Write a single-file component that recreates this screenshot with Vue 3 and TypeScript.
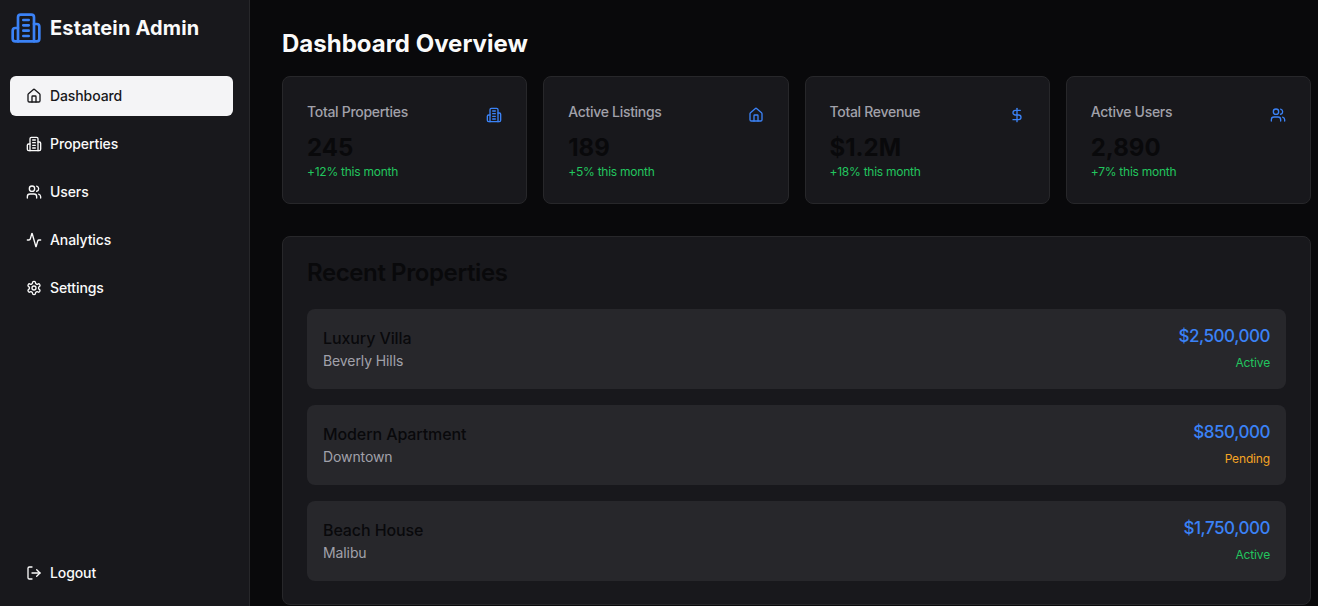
<script setup lang="ts">
type IconName = 'building' | 'home' | 'users' | 'activity' | 'settings' | 'logout' | 'dollar'

const icons: Record<IconName, string[]> = {
  building: [
    'M6 22V4a2 2 0 0 1 2-2h8a2 2 0 0 1 2 2v18Z',
    'M6 12H4a2 2 0 0 0-2 2v6a2 2 0 0 0 2 2h2',
    'M18 9h2a2 2 0 0 1 2 2v9a2 2 0 0 1-2 2h-2',
    'M10 6h4',
    'M10 10h4',
    'M10 14h4',
    'M10 18h4',
  ],
  home: [
    'M15 21v-8a1 1 0 0 0-1-1h-4a1 1 0 0 0-1 1v8',
    'M3 10a2 2 0 0 1 .709-1.528l7-5.999a2 2 0 0 1 2.582 0l7 5.999A2 2 0 0 1 21 10v9a2 2 0 0 1-2 2H5a2 2 0 0 1-2-2z',
  ],
  users: [
    'M16 21v-2a4 4 0 0 0-4-4H6a4 4 0 0 0-4 4v2',
    'M13 7a4 4 0 1 1-8 0a4 4 0 1 1 8 0z',
    'M22 21v-2a4 4 0 0 0-3-3.87',
    'M16 3.13a4 4 0 0 1 0 7.75',
  ],
  activity: [
    'M22 12h-2.48a2 2 0 0 0-1.93 1.46l-2.35 8.36a.25.25 0 0 1-.48 0L9.24 2.18a.25.25 0 0 0-.48 0l-2.35 8.36A2 2 0 0 1 4.49 12H2',
  ],
  settings: [
    'M12.22 2h-.44a2 2 0 0 0-2 2v.18a2 2 0 0 1-1 1.73l-.43.25a2 2 0 0 1-2 0l-.15-.08a2 2 0 0 0-2.73.73l-.22.38a2 2 0 0 0 .73 2.73l.15.1a2 2 0 0 1 1 1.72v.51a2 2 0 0 1-1 1.74l-.15.09a2 2 0 0 0-.73 2.73l.22.38a2 2 0 0 0 2.73.73l.15-.08a2 2 0 0 1 2 0l.43.25a2 2 0 0 1 1 1.73V20a2 2 0 0 0 2 2h.44a2 2 0 0 0 2-2v-.18a2 2 0 0 1 1-1.73l.43-.25a2 2 0 0 1 2 0l.15.08a2 2 0 0 0 2.73-.73l.22-.39a2 2 0 0 0-.73-2.73l-.15-.08a2 2 0 0 1-1-1.74v-.5a2 2 0 0 1 1-1.74l.15-.09a2 2 0 0 0 .73-2.73l-.22-.38a2 2 0 0 0-2.73-.73l-.15.08a2 2 0 0 1-2 0l-.43-.25a2 2 0 0 1-1-1.73V4a2 2 0 0 0-2-2z',
    'M15 12a3 3 0 1 1-6 0a3 3 0 1 1 6 0z',
  ],
  logout: ['M9 21H5a2 2 0 0 1-2-2V5a2 2 0 0 1 2-2h4', 'M16 17l5-5-5-5', 'M21 12H9'],
  dollar: ['M12 2v20', 'M17 5H9.5a3.5 3.5 0 0 0 0 7h5a3.5 3.5 0 0 1 0 7H6'],
}

const navItems: { label: string; icon: IconName; active?: boolean }[] = [
  { label: 'Dashboard', icon: 'home', active: true },
  { label: 'Properties', icon: 'building' },
  { label: 'Users', icon: 'users' },
  { label: 'Analytics', icon: 'activity' },
  { label: 'Settings', icon: 'settings' },
]

const stats: { label: string; value: string; change: string; icon: IconName }[] = [
  { label: 'Total Properties', value: '245', change: '+12% this month', icon: 'building' },
  { label: 'Active Listings', value: '189', change: '+5% this month', icon: 'home' },
  { label: 'Total Revenue', value: '$1.2M', change: '+18% this month', icon: 'dollar' },
  { label: 'Active Users', value: '2,890', change: '+7% this month', icon: 'users' },
]

const properties = [
  { name: 'Luxury Villa', place: 'Beverly Hills', price: '$2,500,000', status: 'Active' },
  { name: 'Modern Apartment', place: 'Downtown', price: '$850,000', status: 'Pending' },
  { name: 'Beach House', place: 'Malibu', price: '$1,750,000', status: 'Active' },
]
</script>

<template>
  <div class="layout">
    <aside class="sidebar">
      <div class="brand">
        <svg class="brand-icon" viewBox="0 0 24 24">
          <path v-for="d in icons.building" :key="d" :d="d" />
        </svg>
        <span class="brand-name">Estatein Admin</span>
      </div>

      <nav class="nav">
        <a v-for="item in navItems" :key="item.label" class="nav-item" :class="{ active: item.active }">
          <svg class="icon" viewBox="0 0 24 24">
            <path v-for="d in icons[item.icon]" :key="d" :d="d" />
          </svg>
          <span class="nav-label">{{ item.label }}</span>
        </a>
      </nav>

      <a class="nav-item logout">
        <svg class="icon" viewBox="0 0 24 24">
          <path v-for="d in icons.logout" :key="d" :d="d" />
        </svg>
        <span class="nav-label">Logout</span>
      </a>
    </aside>

    <main class="main">
      <h1 class="page-title">Dashboard Overview</h1>

      <section class="stats">
        <div v-for="stat in stats" :key="stat.label" class="stat-card">
          <div class="stat-text">
            <p class="stat-label">{{ stat.label }}</p>
            <p class="stat-value">{{ stat.value }}</p>
            <p class="stat-change">{{ stat.change }}</p>
          </div>
          <svg class="icon stat-icon" viewBox="0 0 24 24">
            <path v-for="d in icons[stat.icon]" :key="d" :d="d" />
          </svg>
        </div>
      </section>

      <section class="panel">
        <h2 class="panel-title">Recent Properties</h2>
        <div class="rows">
          <div v-for="row in properties" :key="row.name" class="row">
            <div>
              <p class="row-name">{{ row.name }}</p>
              <p class="row-place">{{ row.place }}</p>
            </div>
            <div class="row-side">
              <p class="row-price">{{ row.price }}</p>
              <p class="row-status" :class="row.status === 'Active' ? 'ok' : 'pending'">{{ row.status }}</p>
            </div>
          </div>
        </div>
      </section>
    </main>
  </div>
</template>

<style scoped>
.layout {
  display: flex;
  height: 606px;
  overflow: hidden;
  background: #09090b;
  font-family: Inter, "Noto Sans", sans-serif;
}

p,
h1,
h2 {
  margin: 0;
}

.sidebar {
  display: flex;
  flex-direction: column;
  flex: 0 0 250px;
  box-sizing: border-box;
  padding: 12px 16px 13px 10px;
  background: #18181c;
  border-right: 1px solid #27272a;
}

.brand {
  display: flex;
  align-items: center;
  gap: 8px;
  margin-bottom: 32px;
}

.brand-icon {
  width: 32px;
  height: 32px;
  fill: none;
  stroke: #3b82f6;
  stroke-width: 2;
  stroke-linecap: round;
  stroke-linejoin: round;
}

.brand-name {
  font-size: 20px;
  line-height: 32px;
  font-weight: 700;
  letter-spacing: 0.15px;
  color: #fafafa;
}

.nav {
  display: flex;
  flex-direction: column;
  gap: 8px;
  flex: 1;
}

.nav-item {
  display: flex;
  align-items: center;
  gap: 8px;
  height: 40px;
  padding: 0 16px;
  border-radius: 6px;
  font-size: 14px;
  font-weight: 500;
  letter-spacing: -0.1px;
  color: #fafafa;
}

.nav-label {
  margin-bottom: 2px;
}

.nav-item.active {
  background: #f4f4f6;
  color: #18181b;
}

.icon {
  flex: none;
  width: 16px;
  height: 16px;
  fill: none;
  stroke: currentColor;
  stroke-width: 2;
  stroke-linecap: round;
  stroke-linejoin: round;
}

.main {
  flex: 1;
  min-width: 0;
  padding: 28px 7px 0 32px;
}

.page-title {
  font-size: 24px;
  line-height: 32px;
  font-weight: 700;
  color: #fafafa;
  margin-bottom: 16px;
}

.stats {
  display: grid;
  grid-template-columns: repeat(4, 1fr);
  gap: 16px;
  margin-bottom: 32px;
}

.stat-card {
  display: flex;
  justify-content: space-between;
  box-sizing: border-box;
  height: 128px;
  padding: 24px;
  background: #18181c;
  border: 1px solid #27272a;
  border-radius: 8px;
}

.stat-label {
  font-size: 14px;
  line-height: 22px;
  font-weight: 500;
  letter-spacing: -0.3px;
  color: #a1a1aa;
}

.stat-value {
  margin-top: 9px;
  font-size: 24px;
  line-height: 32px;
  font-weight: 700;
  color: #09090b;
}

.stat-change {
  font-size: 12px;
  line-height: 16px;
  letter-spacing: -0.25px;
  color: #22c55e;
}

.stat-icon {
  margin-top: 6px;
  color: #3b82f6;
}

.panel {
  box-sizing: border-box;
  height: 369px;
  padding: 24px;
  background: #18181c;
  border: 1px solid #27272a;
  border-radius: 8px;
}

.panel-title {
  font-size: 24px;
  line-height: 24px;
  font-weight: 600;
  letter-spacing: -0.4px;
  color: #09090b;
  margin-bottom: 24px;
}

.rows {
  display: flex;
  flex-direction: column;
  gap: 16px;
}

.row {
  display: flex;
  align-items: center;
  justify-content: space-between;
  box-sizing: border-box;
  height: 80px;
  padding: 16px;
  background: #27272b;
  border-radius: 8px;
}

.row-name {
  font-size: 16px;
  line-height: 24px;
  font-weight: 500;
  letter-spacing: -0.1px;
  color: #09090b;
}

.row-place {
  font-size: 14px;
  line-height: 22px;
  letter-spacing: -0.1px;
  color: #a1a1aa;
}

.row-side {
  text-align: right;
}

.row-price {
  font-size: 17px;
  line-height: 18px;
  font-weight: 500;
  letter-spacing: -0.45px;
  color: #3b82f6;
}

.row-status {
  margin-top: 10px;
  font-size: 12px;
  line-height: 16px;
  letter-spacing: -0.15px;
}

.ok {
  color: #22c55e;
}

.pending {
  color: #f5a524;
}
</style>

<style>
html,
body {
  overflow: hidden;
  background: #09090b;
}
</style>
